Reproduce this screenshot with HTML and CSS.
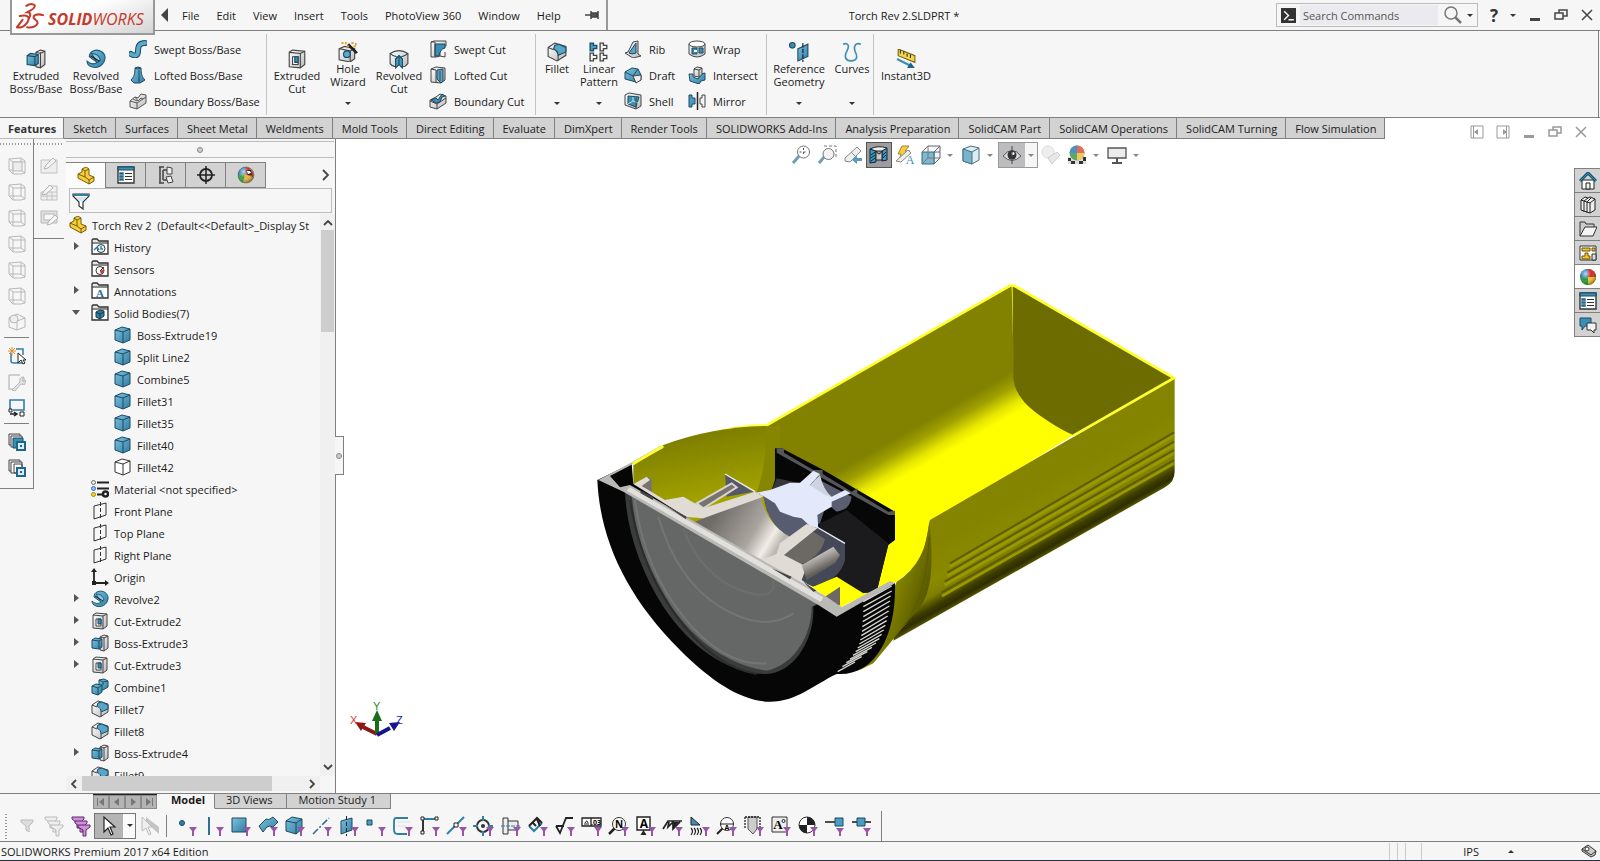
FILE: index.html
```
<!DOCTYPE html>
<html lang="en">
<head>
    <meta charset="utf-8">
    <title>Torch Rev 2.SLDPRT *</title>
    <link rel="stylesheet" href="styles.css">
</head>
<body>
    <!-- icon sprite -->
    <svg class="sprite" aria-hidden="true">
        <defs>
            <linearGradient id="blue" x1="0" y1="0" x2="1" y2="1"><stop offset="0" stop-color="#7fc1de"/><stop offset="1" stop-color="#2f7ea3"/></linearGradient>
            <linearGradient id="grey" x1="0" y1="0" x2="1" y2="1"><stop offset="0" stop-color="#fff"/><stop offset="1" stop-color="#bbb"/></linearGradient>
            <radialGradient id="shine" cx=".35" cy=".3" r=".7"><stop offset="0" stop-color="#fff" stop-opacity=".7"/><stop offset=".5" stop-color="#fff" stop-opacity="0"/><stop offset="1" stop-color="#000" stop-opacity=".35"/></radialGradient>
        </defs>
        <symbol id="extrude" viewBox="0 0 18 18"><path d="M9 3l4-2 4 1v12l-4 3-4-1z" fill="url(#grey)" stroke="#444"/><path d="M13 3v14M9 3l4 1 4-2" fill="none" stroke="#444"/><path d="M1 6l3-2 7 1v8l-3 2-7-1z" fill="url(#blue)" stroke="#1b4b63"/><path d="M1 6l7 1v8M8 7l3-2" fill="none" stroke="#1b4b63"/></symbol>
        <symbol id="revolve" viewBox="0 0 18 18"><path d="M6 2C12-1 18 4 17 9c-1 6-7 9-12 7-3-1-4-3-4-5 3 3 7 3 9 1L3 7c0-3 1-4 3-5z" fill="url(#blue)" stroke="#1b5a78"/><path d="M5 4c4 0 7 2 8 6-1 1-2 2-3 2z" fill="#8ecbe2" stroke="#1b5a78"/><path d="M4 6l8 5" stroke="#222" fill="none"/></symbol>
        <symbol id="sweep" viewBox="0 0 18 18"><path d="M2 14c5 3 7 1 7-3 0-5 1-8 7-8" fill="none" stroke="#1b4b63" stroke-width="6" stroke-linecap="round"/><path d="M2 14c5 3 7 1 7-3 0-5 1-8 7-8" fill="none" stroke="#5ba9cb" stroke-width="4" stroke-linecap="round"/></symbol>
        <symbol id="loft" viewBox="0 0 18 18"><path d="M6 2q3-2 6 0c0 6 1 9 4 12l-5 3H5l-3-3c3-3 4-6 4-12z" fill="url(#blue)" stroke="#1b4b63"/><path d="M6 2q3 2 6 0M10 4v12" fill="none" stroke="#1b4b63"/></symbol>
        <symbol id="boundary" viewBox="0 0 18 18"><path d="M1 9l5-4 3 1 3-4 5 1v8l-9 6-7-2z" fill="url(#grey)" stroke="#555"/><path d="M1 9l7 2 9-6M8 11v6M6 5l3 4 3-3 2 1M4 7l4 2" fill="none" stroke="#555"/></symbol>
        <symbol id="cut" viewBox="0 0 18 18"><path d="M2 3l3-2 11 1v12l-4 3-10-1z" fill="url(#grey)" stroke="#444"/><path d="M2 3l10 1v13M12 4l4-2" fill="none" stroke="#444"/><path d="M5 7h5v7H5z" fill="#fff" stroke="#444"/><path d="M7 7h3v5H7z" fill="#3b8fb5" stroke="#1b4b63"/></symbol>
        <symbol id="hole" viewBox="0 0 18 18"><path d="M1 6l5-2 9 2v9l-4 3-10-2z" fill="url(#grey)" stroke="#444"/><path d="M1 6l10 2v10M11 8l4-2" fill="none" stroke="#444"/><circle cx="8" cy="11" r="3" fill="#5ba9cb" stroke="#1b4b63"/><path d="M9 2l8 8" stroke="#222" stroke-width="2.500"/><path d="M3 1h2M7 0v2M12 1h2M16 1v2M8 4h2M14 4h2" stroke="#e29a1c" stroke-width="1.500"/></symbol>
        <symbol id="revcut" viewBox="0 0 18 18"><path d="M1 4q8-5 16 0v9q-2 3-5 3V9L9 6 6 9v7q-4-1-5-3z" fill="url(#grey)" stroke="#444"/><path d="M9 6l3 3v8l-3-3-3 3V9z" fill="#4a9cc0" stroke="#1b4b63"/><path d="M9 6v8M1 4q3 3 6 3M17 4q-3 3-6 3" fill="none" stroke="#1b4b63"/></symbol>
        <symbol id="sweptcut" viewBox="0 0 18 18"><path d="M2 2l3-1h12v5q-5 0-6 4v6l-4 1H2z" fill="url(#grey)" stroke="#444"/><path d="M6 4h10v4q-5 1-6 8H6z" fill="#3b8fb5" stroke="#1b4b63"/><path d="M2 2h4v15M11 16l5 1V12" fill="none" stroke="#444"/></symbol>
        <symbol id="loftcut" viewBox="0 0 18 18"><path d="M2 3l5-2 9 1v12l-4 3-10-1z" fill="url(#grey)" stroke="#444"/><path d="M8 4l6-1v12l-2 2-4-4z" fill="#58a5c7" stroke="#1b4b63"/><path d="M2 3l5 1v12M11 5v10" fill="none" stroke="#444"/></symbol>
        <symbol id="boundcut" viewBox="0 0 18 18"><path d="M1 8l6-3 4-3 6 2v7l-9 6-7-2z" fill="url(#grey)" stroke="#444"/><path d="M2 8l5-2 2 2 4-6 3 2-3 1-2 5-4 1z" fill="#3b8fb5" stroke="#1b4b63"/><path d="M1 9l7 3 9-6M8 12v5" fill="none" stroke="#444"/></symbol>
        <symbol id="fillet" viewBox="0 0 18 18"><path d="M1 5l6-4 10 3v8l-8 5-8-4z" fill="url(#grey)" stroke="#444"/><path d="M7 3l4-1 6 3v4l-7 3c0-3-1-4-4-6z" fill="#58a5c7" stroke="#1b4b63"/><path d="M1 5l5 2M10 12v5" stroke="#444" fill="none"/></symbol>
        <symbol id="pattern" viewBox="0 0 18 18"><path d="M1 1h3v2h3v3H4v2H1z" fill="#4a9cc0" stroke="#1b4b63" stroke-width="1.200"/><g fill="none" stroke="#444" stroke-width="1.200"><path d="M10 1h3v2h3v3h-3v2h-3zM1 10h3v2h3v3H4v2H1zM10 10h3v2h3v3h-3v2h-3z"/></g></symbol>
        <symbol id="rib" viewBox="0 0 18 18"><path d="M9 2l5-1v13l3 2-8 2-8-5 3-1z" fill="url(#grey)" stroke="#444"/><path d="M12 3v10l-4 1-3-1z" fill="#58a5c7" stroke="#1b4b63"/></symbol>
        <symbol id="draft" viewBox="0 0 18 18"><path d="M1 6l7-4 6 1 3 6v5l-5 2-11-3z" fill="url(#blue)" stroke="#1b4b63"/><path d="M9 10l8-1v5l-5 3z" fill="#eee" stroke="#444"/><path d="M1 6l8 4 5-7" fill="none" stroke="#1b4b63"/></symbol>
        <symbol id="shell" viewBox="0 0 18 18"><path d="M1 3l4-2 12 2v11l-5 3-11-4z" fill="url(#grey)" stroke="#444"/><path d="M4 4l11 1-3 10-8-3z" fill="#3b8fb5" stroke="#1b4b63"/><path d="M4 12l5-3 5 2M9 9V5" fill="none" stroke="#bfe2f0"/><path d="M12 6v11" stroke="#444"/></symbol>
        <symbol id="wrap" viewBox="0 0 18 18"><path d="M1 4v10q8 6 16 0V4" fill="url(#grey)" stroke="#444"/><ellipse cx="9" cy="4" rx="8" ry="3" fill="#fff" stroke="#444"/><path d="M4 8h5v6H4zM11 8h4v5h-4z" fill="#3b8fb5" stroke="#1b4b63"/><path d="M6 10h3v2H6z" fill="#fff"/></symbol>
        <symbol id="intersect" viewBox="0 0 18 18"><path d="M1 8h4v3l5 2 3-5 4-1v7l-4 1-2 3-9-3z" fill="url(#blue)" stroke="#1b4b63"/><path d="M6 3l3-2 5 1v7l-3 2-5-1z" fill="url(#grey)" stroke="#444"/><path d="M6 3l5 1v7M11 4l3-2" fill="none" stroke="#444"/></symbol>
        <symbol id="mirror" viewBox="0 0 18 18"><path d="M1 3h3v3h3v6H4v3H1z" fill="#4a9cc0" stroke="#1b4b63"/><path d="M9.500 0v18" stroke="#222" stroke-width="1.500"/><path d="M17 3h-3v3h-2v6h2v3h3z" fill="none" stroke="#444"/></symbol>
        <symbol id="refgeo" viewBox="0 0 18 18"><circle cx="3" cy="3" r="2.500" fill="#3b8fb5" stroke="#1b4b63"/><path d="M8 6l9-4v11l-9 4z" fill="url(#blue)" stroke="#1b4b63"/><path d="M12.500 1v17" stroke="#113" stroke-dasharray="4 1"/></symbol>
        <symbol id="curves" viewBox="0 0 18 18"><path d="M1 2c5-2 6 2 3 7-2 4-1 8 4 8 6 0 6-4 4-8-2-5 0-9 5-7" fill="none" stroke="#3b8fb5" stroke-width="1.500"/></symbol>
        <symbol id="instant" viewBox="0 0 18 18"><path d="M2 0l15 6v6L2 6z" fill="#f5d84a" stroke="#7a6510"/><path d="M4 1v3M7 2v3M10 4v3M13 5v3" stroke="#333"/><path d="M1 9l12 6" stroke="#3b8fb5" stroke-width="2"/><path d="M17 17l-7 0 3-5z" fill="#1f6688"/></symbol>
        <symbol id="part" viewBox="0 0 18 18"><path d="M1 7l4-2V2l4-2 3 2v6l5 2v4l-5 3L1 11z" fill="#f4cf3a" stroke="#7a5a08"/><path d="M5 2l3 2 4-2M8 4v6l4 3 5-3M12 13v4M1 7l7 3" fill="none" stroke="#7a5a08"/></symbol>
        <symbol id="props" viewBox="0 0 18 18"><path d="M1 1h16v16H1z" fill="#fff" stroke="#333" stroke-width="1.400"/><path d="M1 1h16v3H1z" fill="#3b8fb5" stroke="#1b4b63"/><path d="M3 7h3v1H3zM3 10h3v1H3zM3 13h3v1H3z" fill="#fff" stroke="#1f6688" stroke-width="1.500"/><path d="M8 7.500h7M8 10.500h7M8 13.500h7" stroke="#333"/></symbol>
        <symbol id="config" viewBox="0 0 18 18"><path d="M2 1h5M2 17h5M3 1v16M6 4v10M6 4h4M6 14h4" stroke="#444" stroke-width="1.500" fill="none"/><path d="M10 1l5 1v6h-5zM9 11l5-1 2 6-5 1z" fill="#eee" stroke="#444"/></symbol>
        <symbol id="target" viewBox="0 0 18 18"><circle cx="9" cy="9" r="6" fill="none" stroke="#222" stroke-width="1.800"/><path d="M9 0v18M0 9h18" stroke="#222" stroke-width="1.500"/></symbol>
        <symbol id="ball" viewBox="0 0 18 18"><circle cx="9" cy="9" r="8" fill="#2a9a3c"/><path d="M9 9V1a8 8 0 0 1 8 8z" fill="#d52b26"/><path d="M9 9h8a8 8 0 0 1-8 8z" fill="#f0c42e"/><path d="M9 9H1a8 8 0 0 1 8-8z" fill="#2874c0"/><circle cx="9" cy="9" r="8" fill="url(#shine)"/></symbol>
        <symbol id="display" viewBox="0 0 18 18"><circle cx="9" cy="9" r="8" fill="#e5b545"/><path d="M9 1a8 8 0 0 1 7 10L7 8z" fill="#cc2d24"/><path d="M9 1a8 8 0 0 0-8 8l7-1z" fill="#2874c0"/><path d="M1 9l7-1-2 9Q1 15 1 9z" fill="#3fa24c"/><path d="M8 4l6 0 1 5-4 0z" fill="#222"/><path d="M10 5l3 0 1 2-3 1z" fill="#fff"/><circle cx="9" cy="9" r="8" fill="url(#shine)" stroke="#555" stroke-width=".5"/></symbol>
        <symbol id="funnel" viewBox="0 0 18 18"><path d="M1 2h16v2l-6 6v7l-4-3v-4L1 4z" fill="#fff" stroke="#333" stroke-width="1.200"/><path d="M1 2h16v2H1z" fill="#2f7ea3"/><path d="M3 5h12l-5 5z" fill="#cfe8f2"/></symbol>
        <symbol id="folder" viewBox="0 0 18 18"><path d="M1 16V2l1-1h4l2 2h9v13z" fill="#e6e6e6" stroke="#333" stroke-width="1.300"/><path d="M1 5h16" stroke="#333"/><path d="M2 6h14v9H2z" fill="#fff"/></symbol>
        <symbol id="history" viewBox="0 0 18 18"><use href="#folder"/><circle cx="10" cy="10.500" r="4" fill="#e8f4f9" stroke="#333"/><path d="M10 8v3h2M3 12l3-3 2 3" stroke="#2f7ea3" stroke-width="1.400" fill="none"/></symbol>
        <symbol id="sensors" viewBox="0 0 18 18"><use href="#folder"/><circle cx="9" cy="10.500" r="4" fill="#fff" stroke="#333"/><path d="M9 11l4-4" stroke="#333"/><path d="M9 11l4-2v3l-3 2z" fill="#c8402f"/></symbol>
        <symbol id="bodies" viewBox="0 0 18 18"><use href="#folder"/><path d="M5 8l4-2 4 1v5l-4 3-4-2z" fill="#2f7ea3" stroke="#12384c"/><path d="M5 8l4 2 4-2M9 10v5" fill="none" stroke="#12384c"/></symbol>
        <symbol id="cube" viewBox="0 0 18 18"><path d="M1 4l7-3 8 2v11l-7 3-8-3z" fill="url(#blue)" stroke="#1b4b63"/><path d="M1 4l8 2v11M9 6l7-3" fill="none" stroke="#1b4b63"/></symbol>
        <symbol id="cubewhite" viewBox="0 0 18 18"><path d="M1 4l7-3 8 2v11l-7 3-8-3z" fill="#fff" stroke="#333"/><path d="M1 4l8 2v11M9 6l7-3" fill="none" stroke="#333"/></symbol>
        <symbol id="material" viewBox="0 0 18 18"><path d="M6 2.500h12M6 8.500h12M6 14.500h6" stroke="#222" stroke-width="2"/><circle cx="2.500" cy="2.500" r="2" fill="#eee" stroke="#666"/><circle cx="2.500" cy="8.500" r="2" fill="#8fc4ee" stroke="#36c"/><circle cx="2.500" cy="14.500" r="2" fill="#f0d72e" stroke="#a80"/><circle cx="14.500" cy="14" r="2.500" fill="#fff" stroke="#222" stroke-width="2.500"/></symbol>
        <symbol id="plane" viewBox="0 0 18 18"><path d="M3 4l12-3v12L3 17z" fill="none" stroke="#333"/><path d="M9.500 0v18" stroke="#333" stroke-dasharray="4 2"/></symbol>
        <symbol id="origin" viewBox="0 0 18 18"><path d="M3 3v12h12" fill="none" stroke="#222" stroke-width="1.800"/><path d="M0 4l3-4 3 4zM14 12l4 3-4 3zM1 13h4v4H1z" fill="#222"/></symbol>
        <symbol id="combine" viewBox="0 0 18 18"><path d="M8 2l5-1 4 2v6l-5 3-4-2z" fill="url(#blue)" stroke="#1b4b63"/><path d="M1 8l4-2 6 1v7l-4 3-6-2z" fill="url(#blue)" stroke="#1b4b63"/><path d="M1 8l6 2v7M7 10l4-3M8 2l4 2v3M12 4l5-1" fill="none" stroke="#1b4b63"/></symbol>
        <symbol id="wire" viewBox="0 0 18 18"><path d="M1 2l12-1 4 3v12l-4 1H5l-4-4zM1 2l4 3v12M5 5h12M13 1v12H1M13 13l4 3" fill="none" stroke="#b8b8b8"/></symbol>
        <symbol id="wiresel" viewBox="0 0 18 18"><use href="#wire"/><path d="M5 5h9v9H5z" fill="#ececec" stroke="#b8b8b8"/></symbol>
        <symbol id="wireiso" viewBox="0 0 18 18"><path d="M1 5l8-4 8 4v9l-8 3-8-3zM1 5l8 3 8-3M9 8v9" fill="none" stroke="#b8b8b8"/><circle cx="6" cy="6" r="4" fill="#eee" stroke="#b8b8b8"/></symbol>
        <symbol id="sketch1" viewBox="0 0 18 18"><path d="M1 3h16v13H1z" fill="#eee" stroke="#c2c2c2"/><path d="M4 12l2-4 7-7 3 3-8 7z" fill="#f5f5f5" stroke="#b4b4b4"/></symbol>
        <symbol id="sketch2" viewBox="0 0 18 18"><path d="M1 9h16v8H1zM1 13h16M7 9v8M12 9v8M8 3h9v6" fill="#eee" stroke="#c2c2c2"/><path d="M2 12l2-4 6-6 3 3-7 6z" fill="#f5f5f5" stroke="#b4b4b4"/></symbol>
        <symbol id="sketch3" viewBox="0 0 18 18"><path d="M1 2h16v12H1z" fill="#e0e0e0" stroke="#b8b8b8"/><path d="M4 5h10v6H4z" fill="#f7f7f7" stroke="#b8b8b8"/><path d="M7 16l2-4 6-6 3 3-7 6z" fill="#f5f5f5" stroke="#b4b4b4"/></symbol>
        <symbol id="newsketch" viewBox="0 0 18 18"><path d="M3 6v8q0 2 3 2h11M8 2h7v6" fill="none" stroke="#2f7ea3" stroke-width="1.500"/><path d="M4 0v8M0 4h8M1 1l6 6M7 1L1 7" stroke="#e0932a"/><path d="M10 6v10l3-3 2 4 2-1-2-3h3z" fill="#fff" stroke="#222"/></symbol>
        <symbol id="tool" viewBox="0 0 18 18"><path d="M1 2h11M1 2v14h8M16 5v7" fill="none" stroke="#c2c2c2" stroke-width="1.500"/><path d="M4 17l8-8c-1-4 1-5 4-5l-2 3 2 2 2-2c0 4-2 5-5 4l-6 7z" fill="#e2e2e2" stroke="#b8b8b8"/></symbol>
        <symbol id="route" viewBox="0 0 18 18"><path d="M2 10V1h14v10H5" fill="none" stroke="#2f7ea3" stroke-width="1.600"/><path d="M1 10h3v3H1zM12 13h4v4h-4z" fill="#fff" stroke="#222"/><path d="M2 15h6M6 13l3 2-3 2" stroke="#222" stroke-width="1.500" fill="none"/></symbol>
        <symbol id="stack1" viewBox="0 0 18 18"><path d="M1 1h11v11H1z" fill="#eee" stroke="#444"/><path d="M3 3h11v11H3z" fill="#fff" stroke="#444"/><path d="M5 5h10v10H5z" fill="#3b8fb5" stroke="#1b4b63"/><path d="M9 9h8v8H9z" fill="#d8eef6" stroke="#1f6688" stroke-width="2"/><path d="M12 12h2v2h-2z" fill="#1f6688"/></symbol>
        <symbol id="stack2" viewBox="0 0 18 18"><path d="M1 1h11v11H1z" fill="#eee" stroke="#444"/><path d="M3 3h11v11H3zM6 5h8v9H6z" fill="#fff" stroke="#444"/><path d="M9 9h8v8H9z" fill="#d8eef6" stroke="#1f6688" stroke-width="2"/><path d="M12 12h2v2h-2z" fill="#1f6688"/></symbol>
        <!-- view toolbar -->
        <symbol id="zoomfit" viewBox="0 0 20 20"><path d="M2 18l7-8" stroke="#6e9fb5" stroke-width="3"/><circle cx="12.500" cy="7" r="6" fill="#fff" stroke="#777"/><path d="M12.500 3v8M8.500 7h8" stroke="#555" stroke-dasharray="2 2"/></symbol>
        <symbol id="zoomarea" viewBox="0 0 20 20"><path d="M7 1h12v12" fill="none" stroke="#777" stroke-dasharray="3 2"/><path d="M2 18l6-7" stroke="#6e9fb5" stroke-width="3"/><circle cx="11.500" cy="9" r="5.500" fill="#f3f3f3" stroke="#777"/></symbol>
        <symbol id="prevview" viewBox="0 0 20 20"><path d="M2 13L14 2l4 4L7 17l-5-1z" fill="#eee" stroke="#888"/><path d="M8 7l4 4" stroke="#888"/><path d="M19 13h-5v-3l-5 5 5 4v-3h5z" fill="#5c9cba"/></symbol>
        <symbol id="section" viewBox="0 0 20 20"><path d="M1 4l6 2v11l-6 1zM13 6l5-3v12l-5 1z" fill="#3b9cc6" stroke="#10222c"/><path d="M1 4q8-4 17-1l-5 3H7z" fill="#eee" stroke="#222"/><path d="M7 6q3 6 6 0v9H7z" fill="#c9c9c9" stroke="#222"/><path d="M2 10l4-3M2 13l4-3M2 16l4-3M14 10l3-3M14 13l3-3" stroke="#10222c"/></symbol>
        <symbol id="viewann" viewBox="0 0 20 20"><path d="M7 1h7l-4 5h5L4 16l2-7H3z" fill="#f3cd45" stroke="#a88420"/><path d="M1 16L13 5l3 3-10 9z" fill="#eee" stroke="#888"/></symbol>
        <symbol id="orient" viewBox="0 0 20 20"><path d="M7 1h12v12l-6 6V7h6M7 1L1 7M19 1l-6 6" fill="#eef6f9" stroke="#666"/><path d="M1 7h12v12H1z" fill="#7fb9d0" stroke="#336680"/><path d="M7 13V1M19 13H7l-6 6" fill="none" stroke="#777"/></symbol>
        <symbol id="dispcube" viewBox="0 0 20 20"><path d="M2 4l8-3 8 2v12l-7 4-9-3z" fill="#dcecf2" stroke="#446f82"/><path d="M2 4l9 3v12l-9-3z" fill="#78b4cc" stroke="#446f82"/><path d="M11 7l7-4" stroke="#446f82"/></symbol>
        <symbol id="eye" viewBox="0 0 20 20"><path d="M1 11q9-11 18 0-9 9-18 0z" fill="#ddd" stroke="#555"/><circle cx="10" cy="10" r="4.500" fill="#333"/><circle cx="11" cy="8.500" r="1.500" fill="#fff"/><path d="M10 1v18" stroke="#444"/></symbol>
        <symbol id="scene" viewBox="0 0 20 20"><circle cx="7" cy="7" r="6" fill="#eee" stroke="#ddd"/><path d="M7 13l9-6 3 3-8 9z" fill="#e8e8e8" stroke="#ccc"/></symbol>
        <symbol id="appear" viewBox="0 0 20 20"><path d="M1 12h18v7H1z" fill="#ddd"/><path d="M1 13h3v3H1zM4 16h4v3H4zM12 16h4v3h-4zM16 12h3v4h-3z" fill="#333"/><circle cx="10" cy="8" r="7.500" fill="#5ca867"/><path d="M10 8V.5a7.500 7.500 0 0 1 7.500 7.500z" fill="#e46a58"/><path d="M10 8h7.500a7.500 7.500 0 0 1-7.500 7.500z" fill="#edc95d"/><path d="M10 8H2.500A7.500 7.500 0 0 1 10 .5z" fill="#4d90c8"/></symbol>
        <symbol id="monitor" viewBox="0 0 20 20"><path d="M1 3h18v10H1z" fill="#ececec" stroke="#555" stroke-width="1.300"/><path d="M10 13v4M5 18h10" stroke="#555" stroke-width="2"/></symbol>
        <!-- task pane -->
        <symbol id="home" viewBox="0 0 18 18"><path d="M3 8h12v9H3z" fill="#fff" stroke="#222"/><path d="M7 11h4v6H7z" fill="#eee" stroke="#222"/><path d="M1 9l8-8 8 8" fill="none" stroke="#17516d" stroke-width="3"/><path d="M1 9l8-8 8 8" fill="none" stroke="#3b8fb5"/></symbol>
        <symbol id="library" viewBox="0 0 18 18"><path d="M2 4l4-3 3 1 2-1 5 2v11l-5 3-9-3z" fill="#eee" stroke="#222"/><path d="M2 4l3 1v11M5 5l4-3M5 5l3 1v11M8 6l4-4M8 6l3 1v10M11 7l5-4" fill="none" stroke="#222"/></symbol>
        <symbol id="open" viewBox="0 0 18 18"><path d="M1 16V2h5l1 2h8v3" fill="#ccc" stroke="#333"/><path d="M1 16L6 7h12l-4 9z" fill="#f5f5f5" stroke="#333"/></symbol>
        <symbol id="palette" viewBox="0 0 18 18"><path d="M1 2h16v14H1z" fill="#fff" stroke="#333"/><path d="M3 4h8v3H3zM13 4h3v3h-3zM6 9h3v3h2v3H3v-3h3z" fill="#f0c42e" stroke="#6a5508"/><path d="M13 10h4v6h-4z" fill="#ddd" stroke="#333"/></symbol>
        <symbol id="forum" viewBox="0 0 18 18"><path d="M1 2h11v8H6l-3 4v-4H1z" fill="#3b8fb5" stroke="#1b4b63"/><path d="M8 7h9v7h-2v3l-3-3H8z" fill="#f2f2f2" stroke="#333"/></symbol>
        <!-- selection filters -->
        <symbol id="pf" viewBox="0 0 24 24"><path d="M14 13h8l-3 4v5h-2v-5z" fill="#9a55a8"/></symbol>
        <symbol id="f-off" viewBox="0 0 24 24"><path d="M6 6h12v2l-4 4v6l-3-2v-4L6 8z" fill="#ddd" stroke="#bbb"/></symbol>
        <symbol id="f-offs" viewBox="0 0 24 24"><g fill="#eee" stroke="#bbb"><path d="M3 3h12v2l-4 4v5H8V9L3 5z"/><path d="M6 7h12v2l-4 4v5h-3v-5L6 9z"/><path d="M9 11h12v2l-4 3v6h-3v-6l-5-3z"/></g></symbol>
        <symbol id="f-all" viewBox="0 0 24 24"><g fill="#cf8fdc" stroke="#5c2a69"><path d="M3 3h12v2l-4 4v5H8V9L3 5z"/><path d="M6 7h12v2l-4 4v5h-3v-5L6 9z"/><path d="M9 11h12v2l-4 3v6h-3v-6l-5-3z"/></g></symbol>
        <symbol id="arrow" viewBox="0 0 24 24"><path d="M8 3v15l4-4 3 7 2-1-3-7h5z" fill="#fff" stroke="#222" stroke-width="1.200"/></symbol>
        <symbol id="arrowoff" viewBox="0 0 24 24"><path d="M8 3l13 10v7L8 8z" fill="#c4c4c4"/><path d="M4 3v14l4-3 3 7 2-1-3-7h4z" fill="#eee" stroke="#bbb"/></symbol>
        <symbol id="f-pt" viewBox="0 0 24 24"><circle cx="7" cy="9" r="2.500" fill="#2f7ea3" stroke="#1b4b63"/><use href="#pf"/></symbol>
        <symbol id="f-edge" viewBox="0 0 24 24"><path d="M7 3v18" stroke="#2f6f8f" stroke-width="2"/><use href="#pf"/></symbol>
        <symbol id="f-face" viewBox="0 0 24 24"><path d="M3 4h14v14H3z" fill="url(#blue)" stroke="#1b4b63"/><use href="#pf"/></symbol>
        <symbol id="f-surf" viewBox="0 0 24 24"><path d="M3 12l7-7q3 1 4 0l3-2 5 5-5 5q-3-2-6 0l-4 5z" fill="url(#blue)" stroke="#1b4b63"/><use href="#pf"/></symbol>
        <symbol id="f-solid" viewBox="0 0 24 24"><path d="M3 7l6-4 10 2v10l-6 5-10-3z" fill="url(#blue)" stroke="#1b4b63"/><path d="M3 7l10 2v11M13 9l6-4" fill="none" stroke="#1b4b63"/><use href="#pf"/></symbol>
        <symbol id="f-axis" viewBox="0 0 24 24"><path d="M3 20L19 4" stroke="#2f6f8f" stroke-width="1.600" stroke-dasharray="7 2 2 2"/><use href="#pf"/></symbol>
        <symbol id="f-plane" viewBox="0 0 24 24"><path d="M4 7l11-3v12L4 20z" fill="url(#blue)" stroke="#1b4b63"/><path d="M9.500 2v20" stroke="#222" stroke-dasharray="4 2"/><use href="#pf"/></symbol>
        <symbol id="f-skpt" viewBox="0 0 24 24"><path d="M3 6h5v5H3z" fill="#4a9cc0" stroke="#1b4b63"/><use href="#pf"/></symbol>
        <symbol id="f-sk" viewBox="0 0 24 24"><path d="M17 4H5q-2 0-2 3v9q0 4 4 4h9" fill="none" stroke="#2f7ea3" stroke-width="1.800"/><path d="M7 8h12M7 12h8" stroke="#ddd"/><use href="#pf"/></symbol>
        <symbol id="f-skseg" viewBox="0 0 24 24"><path d="M5 5h13" stroke="#2f7ea3" stroke-width="2"/><path d="M5 5v14" stroke="#333" stroke-width="2"/><path d="M3 3h3v3H3zM17 3h3v3h-3zM3 17h3v3H3z" fill="#fff" stroke="#222"/><use href="#pf"/></symbol>
        <symbol id="f-mid" viewBox="0 0 24 24"><path d="M2 20L19 3" stroke="#2f7ea3" stroke-width="2"/><path d="M9 9h4v4H9z" fill="#fff" stroke="#222"/><use href="#pf"/></symbol>
        <symbol id="f-center" viewBox="0 0 24 24"><circle cx="11" cy="12" r="6" fill="none" stroke="#333" stroke-width="2"/><circle cx="11" cy="12" r="2" fill="#333"/><path d="M11 2v5M11 17v5M1 12h5M16 12h5" stroke="#2f7ea3" stroke-width="2"/><use href="#pf"/></symbol>
        <symbol id="f-cline" viewBox="0 0 24 24"><path d="M4 4h5v16H4zM9 7h10v9H9" fill="#eee" stroke="#333"/><path d="M2 12h20" stroke="#2f7ea3" stroke-dasharray="4 1"/><use href="#pf"/></symbol>
        <symbol id="f-dim" viewBox="0 0 24 24"><path d="M3 12l5 5 8-8" fill="none" stroke="#2f7ea3" stroke-width="2"/><path d="M3 12l8-8 5 5M6 8l4 4M11 5l3 7" fill="none" stroke="#222" stroke-width="2"/><use href="#pf"/></symbol>
        <symbol id="f-surffin" viewBox="0 0 24 24"><path d="M3 12h8M3 12l4 7L13 4h7" fill="none" stroke="#222" stroke-width="1.800"/><use href="#pf"/></symbol>
        <symbol id="f-gtol" viewBox="0 0 24 24"><path d="M2 4h19v8H2zM11 4v8" fill="#fff" stroke="#222" stroke-width="1.300"/><path d="M4 10h5M5 9q2-4 3 0" fill="none" stroke="#222"/><use href="#pf"/></symbol>
        <symbol id="f-note" viewBox="0 0 24 24"><path d="M2 20l6-6" stroke="#222" stroke-width="2.500"/><circle cx="12" cy="10" r="6.500" fill="#fff" stroke="#333"/><use href="#pf"/></symbol>
        <symbol id="f-datum" viewBox="0 0 24 24"><path d="M3 3h13v13H3z" fill="#fff" stroke="#222" stroke-width="1.400"/><path d="M9.500 16l3 5h-6z" fill="#222"/><use href="#pf"/></symbol>
        <symbol id="f-weld" viewBox="0 0 24 24"><path d="M2 15l5-8h14M8 8l-1 5 5-5v7l7-7" fill="none" stroke="#222" stroke-width="1.700"/><path d="M12 8h6l-6 7z" fill="#222"/><use href="#pf"/></symbol>
        <symbol id="f-weldb" viewBox="0 0 24 24"><path d="M3 3v8h9z" fill="#3b8fb5" stroke="#222"/><path d="M3 14q3 3 0 7M6 14q3 3 0 7M9 14q3 3 0 7M12 14q3 3 0 7" fill="none" stroke="#222" stroke-width="1.200"/><use href="#pf"/></symbol>
        <symbol id="f-datumt" viewBox="0 0 24 24"><path d="M2 20l6-6" stroke="#222" stroke-width="2"/><circle cx="12" cy="10" r="6.500" fill="#fff" stroke="#333"/><path d="M5 10h14" stroke="#222"/><use href="#pf"/></symbol>
        <symbol id="f-cosm" viewBox="0 0 24 24"><path d="M6 3h9v12l-4 5-5-5z" fill="#ccc" stroke="#555"/><path d="M3 3v12M18 3v10M3 3h15" fill="none" stroke="#222" stroke-dasharray="2 1" stroke-width="1.300"/><use href="#pf"/></symbol>
        <symbol id="f-block" viewBox="0 0 24 24"><path d="M3 3h15v15H3z" fill="#eee" stroke="#333"/><circle cx="14.500" cy="7" r="1.500" fill="none" stroke="#222"/><use href="#pf"/></symbol>
        <symbol id="f-dowel" viewBox="0 0 24 24"><circle cx="11" cy="11" r="8" fill="#fff" stroke="#333"/><path d="M11 11V3a8 8 0 0 1 8 8zM11 11v8a8 8 0 0 1-8-8z" fill="#222"/><use href="#pf"/></symbol>
        <symbol id="f-conn" viewBox="0 0 24 24"><path d="M2 8h12" stroke="#222" stroke-width="1.600"/><path d="M12 4h8v8h-8z" fill="#4a9cc0" stroke="#1b4b63"/><path d="M13 14h8l-3 4v4h-2v-4z" fill="#9a55a8"/></symbol>
        <symbol id="f-route" viewBox="0 0 24 24"><path d="M2 8h19" stroke="#222" stroke-width="1.600"/><path d="M7 4h8v8H7z" fill="#4a9cc0" stroke="#1b4b63"/><path d="M13 14h8l-3 4v4h-2v-4z" fill="#9a55a8"/></symbol>
        <!-- window controls -->
        <symbol id="restore" viewBox="0 0 14 14"><path d="M5 5V2h8v6H9M1 5h8v6H1z" fill="none" stroke="currentColor" stroke-width="1.500"/></symbol>
        <symbol id="close" viewBox="0 0 14 14"><path d="M2 2l10 10M12 2L2 12" stroke="currentColor" stroke-width="1.500"/></symbol>
        <symbol id="minimize" viewBox="0 0 14 14"><path d="M2 10h10v3H2z" fill="currentColor"/></symbol>
        <symbol id="dockleft" viewBox="0 0 14 14"><path d="M1 1h12v12H1zM3.500 1v12" fill="none" stroke="currentColor"/><path d="M8 4v6L4 7z" fill="currentColor"/></symbol>
        <symbol id="dockright" viewBox="0 0 14 14"><path d="M1 1h12v12H1zM10.500 1v12" fill="none" stroke="currentColor"/><path d="M7 4v6l4-3z" fill="currentColor"/></symbol>
    </svg>

    <div class="app">
        <header class="titlebar">
            <div class="menubar">
                <div class="logo">
                    <svg class="logo-mark" viewBox="0 0 30 32" aria-hidden="true"><g fill="none" stroke="#c43a2c" stroke-width="2.200" stroke-linecap="round"><path d="M11 4c5-3 10-2 9 1-1 3-5 4-8 6 4 0 4 3 2 6"/><path d="M4 15c10-2 11 2 8 7-3 4-7 6-11 5l6-8"/><path d="M29 14c-6-2-11 0-10 3 1 2 5 3 4 6s-6 5-11 4"/></g></svg>
                    <span class="logo-text"><b>SOLID</b>WORKS</span>
                </div>
                <button class="menu-toggle" aria-label="Collapse menu"></button>
                <nav class="menu">
                    <button>File</button>
                    <button>Edit</button>
                    <button>View</button>
                    <button>Insert</button>
                    <button>Tools</button>
                    <button>PhotoView 360</button>
                    <button>Window</button>
                    <button>Help</button>
                </nav>
                <button class="pin" aria-label="Pin menu"><svg viewBox="0 0 14 10"><path d="M0 5h6M6 1v8M6 3h6v4H6M13 1v8" fill="#555" stroke="#444" stroke-width="1.500"/></svg></button>
            </div>
            <div class="doc-title">Torch Rev 2.SLDPRT *</div>
            <div class="title-tools">
                <div class="search">
                    <svg class="prompt" viewBox="0 0 14 14" aria-hidden="true"><path d="M0 0h14v14H0z" fill="#333"/><path d="M3 3l4 4-4 4M7 11h5" fill="none" stroke="#fff" stroke-width="1.300"/></svg>
                    <input type="text" placeholder="Search Commands" aria-label="Search Commands">
                    <button class="go" aria-label="Search"><svg viewBox="0 0 18 18"><circle cx="7" cy="7" r="6" fill="none" stroke="#777" stroke-width="1.500"/><path d="M11 11l6 6" stroke="#777" stroke-width="2.500"/></svg><span class="caret"></span></button>
                </div>
                <button class="help">?</button>
                <button class="help-more" aria-label="Help menu"><span class="caret"></span></button>
                <div class="window-buttons">
                    <button aria-label="Minimize"><svg><use href="#minimize"/></svg></button>
                    <button aria-label="Restore"><svg><use href="#restore"/></svg></button>
                    <button aria-label="Close"><svg><use href="#close"/></svg></button>
                </div>
            </div>
        </header>

        <div class="ribbon">
            <div class="ribbon-group">
                <button class="big mid"><svg><use href="#extrude"/></svg><span>Extruded<br>Boss/Base</span></button>
                <button class="big mid"><svg><use href="#revolve"/></svg><span>Revolved<br>Boss/Base</span></button>
                <div class="stack wide">
                    <button><svg><use href="#sweep"/></svg>Swept Boss/Base</button>
                    <button><svg><use href="#loft"/></svg>Lofted Boss/Base</button>
                    <button><svg><use href="#boundary"/></svg>Boundary Boss/Base</button>
                </div>
            </div>
            <div class="ribbon-group">
                <button class="big mid"><svg><use href="#cut"/></svg><span>Extruded<br>Cut</span></button>
                <button class="big slim"><svg><use href="#hole"/></svg><span>Hole<br>Wizard</span><span class="caret"></span></button>
                <button class="big mid"><svg><use href="#revcut"/></svg><span>Revolved<br>Cut</span></button>
                <div class="stack cuts">
                    <button><svg><use href="#sweptcut"/></svg>Swept Cut</button>
                    <button><svg><use href="#loftcut"/></svg>Lofted Cut</button>
                    <button><svg><use href="#boundcut"/></svg>Boundary Cut</button>
                </div>
            </div>
            <div class="ribbon-group">
                <button class="big slim"><svg><use href="#fillet"/></svg><span>Fillet</span><span class="caret"></span></button>
                <button class="big slim"><svg><use href="#pattern"/></svg><span>Linear<br>Pattern</span><span class="caret"></span></button>
                <div class="stack small">
                    <button><svg><use href="#rib"/></svg>Rib</button>
                    <button><svg><use href="#draft"/></svg>Draft</button>
                    <button><svg><use href="#shell"/></svg>Shell</button>
                </div>
                <div class="stack wraps">
                    <button><svg><use href="#wrap"/></svg>Wrap</button>
                    <button><svg><use href="#intersect"/></svg>Intersect</button>
                    <button><svg><use href="#mirror"/></svg>Mirror</button>
                </div>
            </div>
            <div class="ribbon-group">
                <button class="big roomy"><svg><use href="#refgeo"/></svg><span>Reference<br>Geometry</span><span class="caret"></span></button>
                <button class="big slim"><svg><use href="#curves"/></svg><span>Curves</span><span class="caret"></span></button>
            </div>
            <div class="ribbon-group last">
                <button class="big roomy mid"><svg><use href="#instant"/></svg><span>Instant3D</span></button>
            </div>
        </div>

        <div class="tabrow">
            <div class="tabs">
                <button class="active">Features</button>
                <button>Sketch</button>
                <button>Surfaces</button>
                <button>Sheet Metal</button>
                <button>Weldments</button>
                <button>Mold Tools</button>
                <button>Direct Editing</button>
                <button>Evaluate</button>
                <button>DimXpert</button>
                <button>Render Tools</button>
                <button>SOLIDWORKS Add-Ins</button>
                <button>Analysis Preparation</button>
                <button>SolidCAM Part</button>
                <button>SolidCAM Operations</button>
                <button>SolidCAM Turning</button>
                <button>Flow Simulation</button>
            </div>
            <div class="doc-buttons">
                <button aria-label="Dock left"><svg><use href="#dockleft"/></svg></button>
                <button aria-label="Dock right"><svg><use href="#dockright"/></svg></button>
                <button aria-label="Minimize document"><svg><use href="#minimize"/></svg></button>
                <button aria-label="Restore document"><svg><use href="#restore"/></svg></button>
                <button aria-label="Close document"><svg><use href="#close"/></svg></button>
            </div>
        </div>

        <main class="main">
            <div class="sidebar views">
                <button aria-label="Front"><svg><use href="#wiresel"/></svg></button>
                <button aria-label="Back"><svg><use href="#wire"/></svg></button>
                <button aria-label="Left"><svg><use href="#wire"/></svg></button>
                <button aria-label="Right"><svg><use href="#wire"/></svg></button>
                <button aria-label="Top"><svg><use href="#wire"/></svg></button>
                <button aria-label="Bottom"><svg><use href="#wire"/></svg></button>
                <button aria-label="Isometric"><svg><use href="#wireiso"/></svg></button>
                <hr>
                <button aria-label="New sketch"><svg><use href="#newsketch"/></svg></button>
                <button aria-label="Repair"><svg><use href="#tool"/></svg></button>
                <button aria-label="Route"><svg><use href="#route"/></svg></button>
                <hr>
                <button aria-label="Stack"><svg><use href="#stack1"/></svg></button>
                <button aria-label="Stack outline"><svg><use href="#stack2"/></svg></button>
            </div>
            <div class="sidebar sketches">
                <button aria-label="Sketch"><svg><use href="#sketch1"/></svg></button>
                <button aria-label="Sketch grid"><svg><use href="#sketch2"/></svg></button>
                <button aria-label="Edit sketch"><svg><use href="#sketch3"/></svg></button>
            </div>
            <section class="panel">
                <div class="grip"><span class="dot"></span></div>
                <div class="panel-tabs">
                    <button class="active" aria-label="Feature tree"><svg><use href="#part"/></svg></button>
                    <button aria-label="Properties"><svg><use href="#props"/></svg></button>
                    <button aria-label="Configurations"><svg><use href="#config"/></svg></button>
                    <button aria-label="DimXpert manager"><svg><use href="#target"/></svg></button>
                    <button aria-label="Display manager"><svg><use href="#display"/></svg></button>
                    <button class="more" aria-label="More"><svg viewBox="0 0 8 12"><path d="M1 1l5 5-5 5" fill="none" stroke="#444" stroke-width="1.800"/></svg></button>
                </div>
                <div class="filter">
                    <svg><use href="#funnel"/></svg>
                    <input type="text" aria-label="Filter tree">
                </div>
                <div class="tree-wrap">
                    <ul class="tree">
                        <li class="root"><svg><use href="#part"/></svg>Torch Rev 2&nbsp; (Default&lt;&lt;Default&gt;_Display St</li>
                        <li class="closed"><svg><use href="#history"/></svg>History</li>
                        <li><svg><use href="#sensors"/></svg>Sensors</li>
                        <li class="closed"><svg viewBox="0 0 18 18"><use href="#folder"/><text class="serif" x="9" y="15" font-size="11" fill="#2a6f96">A</text></svg>Annotations</li>
                        <li class="opened"><svg><use href="#bodies"/></svg>Solid Bodies(7)</li>
                        <li class="sub"><svg><use href="#cube"/></svg>Boss-Extrude19</li>
                        <li class="sub"><svg><use href="#cube"/></svg>Split Line2</li>
                        <li class="sub"><svg><use href="#cube"/></svg>Combine5</li>
                        <li class="sub"><svg><use href="#cube"/></svg>Fillet31</li>
                        <li class="sub"><svg><use href="#cube"/></svg>Fillet35</li>
                        <li class="sub"><svg><use href="#cube"/></svg>Fillet40</li>
                        <li class="sub"><svg><use href="#cubewhite"/></svg>Fillet42</li>
                        <li><svg><use href="#material"/></svg>Material &lt;not specified&gt;</li>
                        <li><svg><use href="#plane"/></svg>Front Plane</li>
                        <li><svg><use href="#plane"/></svg>Top Plane</li>
                        <li><svg><use href="#plane"/></svg>Right Plane</li>
                        <li><svg><use href="#origin"/></svg>Origin</li>
                        <li class="closed"><svg><use href="#revolve"/></svg>Revolve2</li>
                        <li class="closed"><svg><use href="#cut"/></svg>Cut-Extrude2</li>
                        <li class="closed"><svg><use href="#extrude"/></svg>Boss-Extrude3</li>
                        <li class="closed"><svg><use href="#cut"/></svg>Cut-Extrude3</li>
                        <li><svg><use href="#combine"/></svg>Combine1</li>
                        <li><svg><use href="#fillet"/></svg>Fillet7</li>
                        <li><svg><use href="#fillet"/></svg>Fillet8</li>
                        <li class="closed"><svg><use href="#extrude"/></svg>Boss-Extrude4</li>
                        <li><svg><use href="#fillet"/></svg>Fillet9</li>
                    </ul>
                    <div class="vscroll">
                        <svg viewBox="0 0 10 6"><path d="M1 5l4-4 4 4" fill="none" stroke="#444" stroke-width="1.800"/></svg>
                        <span class="thumb"></span>
                        <svg viewBox="0 0 10 6"><path d="M1 1l4 4 4-4" fill="none" stroke="#444" stroke-width="1.800"/></svg>
                    </div>
                </div>
                <div class="hscroll">
                    <svg viewBox="0 0 6 10"><path d="M5 1L1 5l4 4" fill="none" stroke="#444" stroke-width="1.800"/></svg>
                    <span class="thumb"></span>
                    <svg viewBox="0 0 6 10"><path d="M1 1l4 4-4 4" fill="none" stroke="#444" stroke-width="1.800"/></svg>
                </div>
            </section>

            <section class="viewport">
                <svg class="model" viewBox="336 139 1264 654" role="img" aria-label="Section view of torch">
                    <defs>
                        <linearGradient id="wall" gradientUnits="userSpaceOnUse" x1="796" y1="317" x2="852" y2="415"><stop offset="0" stop-color="#828200"/><stop offset=".35" stop-color="#a0a000"/><stop offset=".75" stop-color="#e6e600"/><stop offset="1" stop-color="#ffff00"/></linearGradient>
                        <linearGradient id="side" gradientUnits="userSpaceOnUse" x1="1182" y1="487" x2="1275" y2="652"><stop offset="0" stop-color="#848400"/><stop offset=".5" stop-color="#8a8a00"/><stop offset=".68" stop-color="#808000"/><stop offset=".85" stop-color="#3c3c00"/><stop offset=".93" stop-color="#2e2e00"/><stop offset="1" stop-color="#555500"/></linearGradient>
                        <linearGradient id="cone" gradientUnits="userSpaceOnUse" x1="440" y1="960" x2="560" y2="1000"><stop offset="0" stop-color="#8e8e00"/><stop offset="1" stop-color="#555500"/></linearGradient>
                        <linearGradient id="bowl" gradientUnits="userSpaceOnUse" x1="300" y1="100" x2="340" y2="320"><stop offset="0" stop-color="#7c7c00"/><stop offset="1" stop-color="#a4a400"/></linearGradient>
                        <linearGradient id="reflector" gradientUnits="userSpaceOnUse" x1="420" y1="320" x2="600" y2="430"><stop offset="0" stop-color="#6e6a66"/><stop offset=".6" stop-color="#aaa59f"/><stop offset=".85" stop-color="#f2ede8"/><stop offset="1" stop-color="#bdb8b2"/></linearGradient>
                        <linearGradient id="tube" gradientUnits="userSpaceOnUse" x1="700" y1="460" x2="725" y2="510"><stop offset="0" stop-color="#d8d3cd"/><stop offset="1" stop-color="#615e5a"/></linearGradient>
                    </defs>
                    <!-- body -->
                    <g transform="translate(740 270) scale(.33333)">
                        <path d="M-150 700L78 465 812 45 1300 322 1000 495 575 745 570 800 540 880 470 935 300 1010 0 800z" fill="#ff0"/>
                        <path d="M0 690L78 465 815 48 822 320Q830 380 890 430L1000 495 560 770 350 900z" fill="url(#wall)"/>
                        <path d="M818 48L1300 325 1000 495Q960 480 890 430 822 380 820 320z" fill="#6c6c00"/>
                        <path d="M570 750L1304 325V605Q1304 635 1275 652L460 1112 480 1010 540 900z" fill="url(#side)"/>
                        <path d="M470 935Q560 880 568 750 590 950 540 1010T400 1180L360 1200z" fill="url(#cone)"/>
                        <path d="M568 800Q560 980 490 1070" fill="none" stroke="#5d5d00" stroke-width="4"/>
                        <g fill="none">
                            <path d="M630 890L1302 497M622 918L1302 525M614 945L1302 550M606 978L1302 580" stroke="#9a9a00" stroke-width="8"/>
                            <path d="M630 880L1302 487M622 908L1302 515M614 935L1302 540M604 968L1302 570" stroke="#5e5e00" stroke-width="6"/>
                            <path d="M-230 560Q-80 465 78 467L805 50Q815 42 828 50L1302 324 1000 497" stroke="#ffff30" stroke-width="8"/>
                        </g>
                    </g>
                    <!-- head, reflector and lens -->
                    <g transform="translate(580 400) scale(.33333)">
                        <path d="M160 195L250 135Q400 80 558 78L600 200V400H330L160 260z" fill="url(#bowl)"/>
                        <path d="M558 78Q562 200 525 290L600 300V78z" fill="#868600"/>
                        <path d="M585 145L605 145 730 210 945 335V420L925 435 890 575 848 578 700 520 560 330 575 270 585 240z" fill="#070707"/>
                        <path d="M720 370L800 330 925 430 890 575 845 580 700 520z" fill="#1b1b1d"/>
                        <path d="M575 270L590 235 660 250 600 280z" fill="#35363c"/>
                        <path d="M590 145L612 145 612 158 700 210 728 210 728 222 815 275 832 265 832 280 925 335 945 332V345L925 345 590 158z" fill="#55565a"/>
                        <path d="M680 365L795 430V480Q780 540 700 560L560 500z" fill="#454856"/>
                        <path d="M795 430L700 375" stroke="#eef" stroke-width="4"/>
                        <path d="M690 225L815 290Q810 330 770 335L740 310z" fill="#5a5e70"/>
                        <path d="M690 255L720 225Q730 270 755 290L720 290z" fill="#cfd2e0"/>
                        <path d="M550 285Q560 370 625 410L720 370 740 310 640 280z" fill="#585c70"/>
                        <path d="M520 280L570 270 630 248 660 248 700 212 720 222 690 255 735 285 755 290 795 270 812 280 755 305 755 320 712 345 715 385 690 378 665 355 640 350 600 335 585 310 550 288z" fill="#e3e9fb"/>
                        <path d="M435 222L520 275 440 290z" fill="#55586a"/>
                        <path d="M435 222L525 275" stroke="#eee" stroke-width="4"/>
                        <path d="M345 365L540 280Q560 380 640 415L560 510z" fill="url(#reflector)"/>
                        <path d="M350 310L455 250 470 262 370 325z" fill="#77736e" stroke="#d9d4ce" stroke-width="6"/>
                        <path d="M185 240L205 230 215 240V290L185 265z" fill="#77736e"/>
                        <path d="M150 258L200 230 210 240 185 258 255 300 310 290 370 325 525 275 550 290 370 355 310 350z" fill="#e0dbd5"/>
                        <path d="M700 395L735 418Q720 480 640 500L605 470z" fill="#6c6864"/>
                        <path d="M545 480L590 462 600 430 680 372 712 385 612 465 680 500 665 540 720 580 640 560z" fill="#e0dbd5"/>
                        <path d="M665 495L760 440 780 465 765 490 680 540z" fill="url(#tube)"/>
                        <path d="M700 560L770 530 850 580 780 625z" fill="#ff0"/>
                        <path d="M735 590L780 560V615L760 620z" fill="#6c6864"/>
                        <path d="M52 240L155 190 160 252 780 640 945 548C950 700 890 830 770 822 700 855 650 905 570 905 490 905 400 850 300 750 140 590 60 420 52 240z" fill="#060606"/>
                        <path d="M135 275L160 270 720 610 700 620C705 720 640 820 560 822 440 820 330 740 250 620 180 510 140 390 135 275z" fill="#3a3b3b"/>
                        <path d="M155 282L720 605 695 620C695 710 640 795 560 812 450 795 350 730 275 620 205 510 165 410 155 282z" fill="#656767"/>
                        <g fill="none" stroke="#7b7d7d" stroke-width="6" opacity=".7"><path d="M165 300Q190 500 310 650T560 790"/><path d="M235 350Q290 540 420 620T640 640"/><path d="M310 390Q370 530 480 570T580 540" opacity=".5"/></g>
                        <path d="M150 300Q180 500 290 650T530 822" fill="none" stroke="#2b2c2c" stroke-width="6"/>
                        <path d="M55 240L150 190 240 138 250 145 90 228 120 262 150 255 740 590 785 622 930 543 945 550 770 650 715 615 130 275z" fill="#b9b9b6"/>
                        <path d="M150 262L730 592 722 606 140 272z" fill="#e2e0dc"/>
                        <path d="M180 270L220 290 218 300 182 280zM255 315L320 350 318 358zM575 505L635 530 630 538zM670 545L710 572 700 575z" fill="#444"/>
                        <path d="M250 138L158 192" stroke="#ff3" stroke-width="8"/>
                        <g stroke="#d8d8d4" stroke-width="4"><path d="M850 605L935 558M850 620L935 573M850 635L932 588M850 650L930 603M848 665L928 618M847 680L926 633M846 694L923 648M844 707L920 662M841 720L916 676M838 732L911 690M833 744L905 703M827 755L898 716M819 766L888 729M810 777L876 742M799 788L862 755M787 800L845 770M773 815L825 786"/></g>
                    </g>
                    <!-- triad -->
                    <path d="M377 734l-14-7" stroke="#8c1616" stroke-width="4"/><path d="M355 722l11 1-5 8z" fill="#8c1616"/>
                    <path d="M377 734V720" stroke="#1b6d1b" stroke-width="4"/><path d="M377 710l5 11h-10z" fill="#1b6d1b"/>
                    <path d="M377 735l13-7" stroke="#16168c" stroke-width="4"/><path d="M400 722l-11 1 5 8z" fill="#16168c"/>
                    <g class="axis"><text x="350" y="724" fill="#d33">X</text><text x="373" y="710" fill="#2a8a2a">Y</text><text x="396" y="724" fill="#22a">Z</text></g>
                </svg>
                <div class="view-toolbar">
                    <button aria-label="Zoom to fit"><svg><use href="#zoomfit"/></svg></button>
                    <button aria-label="Zoom to area"><svg><use href="#zoomarea"/></svg></button>
                    <button aria-label="Previous view"><svg><use href="#prevview"/></svg></button>
                    <button class="on" aria-label="Section view"><svg><use href="#section"/></svg></button>
                    <button aria-label="Annotation views"><svg viewBox="0 0 20 20"><use href="#viewann"/><text class="serif light" x="15" y="19" font-size="12" fill="#3b8fb5">A</text></svg></button>
                    <button class="drop" aria-label="View orientation"><svg><use href="#orient"/></svg><span class="caret"></span></button>
                    <button class="drop" aria-label="Display style"><svg><use href="#dispcube"/></svg><span class="caret"></span></button>
                    <button class="drop eye" aria-label="Hide/show items"><svg><use href="#eye"/></svg><span class="caret"></span></button>
                    <button aria-label="Edit appearance"><svg><use href="#scene"/></svg></button>
                    <button class="drop" aria-label="Apply scene"><svg><use href="#appear"/></svg><span class="caret"></span></button>
                    <button class="drop" aria-label="View settings"><svg><use href="#monitor"/></svg><span class="caret"></span></button>
                </div>
                <div class="splitter"><span class="dot"></span></div>
                <div class="taskpane">
                    <button aria-label="Resources"><svg><use href="#home"/></svg></button>
                    <button aria-label="Design library"><svg><use href="#library"/></svg></button>
                    <button aria-label="File explorer"><svg><use href="#open"/></svg></button>
                    <button aria-label="View palette"><svg><use href="#palette"/></svg></button>
                    <button class="active" aria-label="Appearances"><svg><use href="#ball"/></svg></button>
                    <button aria-label="Custom properties"><svg><use href="#props"/></svg></button>
                    <button aria-label="Forum"><svg><use href="#forum"/></svg></button>
                </div>
            </section>
        </main>

        <div class="sheet-tabs">
            <div class="sheet-nav">
                <button aria-label="First"><svg viewBox="0 0 12 12"><path d="M9 2v8L4 6zM2 2h1v8H2z" fill="#777"/></svg></button>
                <button aria-label="Previous"><svg viewBox="0 0 12 12"><path d="M8 2v8L3 6z" fill="#777"/></svg></button>
                <button aria-label="Next"><svg viewBox="0 0 12 12"><path d="M4 2v8l5-4z" fill="#777"/></svg></button>
                <button aria-label="Last"><svg viewBox="0 0 12 12"><path d="M3 2v8l5-4zM9 2h1v8H9z" fill="#777"/></svg></button>
            </div>
            <button class="active">Model</button>
            <button>3D Views</button>
            <button>Motion Study 1</button>
        </div>

        <div class="filterbar">
            <span class="dots"></span>
            <button aria-label="Toggle filter"><svg><use href="#f-off"/></svg></button>
            <button aria-label="Clear filters"><svg><use href="#f-offs"/></svg></button>
            <button aria-label="All filters"><svg><use href="#f-all"/></svg></button>
            <button class="select" aria-label="Select"><svg><use href="#arrow"/></svg><span class="caret"></span></button>
            <button aria-label="Select over"><svg><use href="#arrowoff"/></svg></button>
            <span class="sep"></span>
            <button aria-label="Vertices"><svg><use href="#f-pt"/></svg></button>
            <button aria-label="Edges"><svg><use href="#f-edge"/></svg></button>
            <button aria-label="Faces"><svg><use href="#f-face"/></svg></button>
            <button aria-label="Surface bodies"><svg><use href="#f-surf"/></svg></button>
            <button aria-label="Solid bodies"><svg><use href="#f-solid"/></svg></button>
            <button aria-label="Axes"><svg><use href="#f-axis"/></svg></button>
            <button aria-label="Planes"><svg><use href="#f-plane"/></svg></button>
            <button aria-label="Sketch points"><svg><use href="#f-skpt"/></svg></button>
            <button aria-label="Sketches"><svg><use href="#f-sk"/></svg></button>
            <button aria-label="Sketch segments"><svg><use href="#f-skseg"/></svg></button>
            <button aria-label="Midpoints"><svg><use href="#f-mid"/></svg></button>
            <button aria-label="Center marks"><svg><use href="#f-center"/></svg></button>
            <button aria-label="Centerlines"><svg><use href="#f-cline"/></svg></button>
            <button aria-label="Dimensions"><svg><use href="#f-dim"/></svg></button>
            <button aria-label="Surface finish"><svg><use href="#f-surffin"/></svg></button>
            <button aria-label="Geometric tolerances"><svg viewBox="0 0 24 24"><use href="#f-gtol"/><text class="mark" x="16" y="11" font-size="7">.03</text></svg></button>
            <button aria-label="Notes"><svg viewBox="0 0 24 24"><use href="#f-note"/><text class="mark" x="12" y="14" font-size="10">N</text></svg></button>
            <button aria-label="Datum features"><svg viewBox="0 0 24 24"><use href="#f-datum"/><text class="mark" x="10" y="14" font-size="12">A</text></svg></button>
            <button aria-label="Weld symbols"><svg><use href="#f-weld"/></svg></button>
            <button aria-label="Weld beads"><svg><use href="#f-weldb"/></svg></button>
            <button aria-label="Datum targets"><svg viewBox="0 0 24 24"><use href="#f-datumt"/><text class="mark" x="12" y="16" font-size="7">A</text></svg></button>
            <button aria-label="Cosmetic threads"><svg><use href="#f-cosm"/></svg></button>
            <button aria-label="Blocks"><svg viewBox="0 0 24 24"><use href="#f-block"/><text class="serif" x="9" y="15" font-size="13">A</text></svg></button>
            <button aria-label="Dowel pins"><svg><use href="#f-dowel"/></svg></button>
            <button aria-label="Connection points"><svg><use href="#f-conn"/></svg></button>
            <button aria-label="Routing points"><svg><use href="#f-route"/></svg></button>
            <span class="sep end"></span>
        </div>

        <footer class="statusbar">
            <span>SOLIDWORKS Premium 2017 x64 Edition</span>
            <div class="status-right">
                <span class="cells"><i></i><i></i><i></i><i></i></span>
                <button class="units">IPS<span class="caret up"></span></button>
                <button class="tag" aria-label="Tags"><svg viewBox="0 0 16 14"><path d="M1 5l6-4 8 6-1 4-4 2-9-6z" fill="#ccc" stroke="#333"/><circle cx="6" cy="5" r="2" fill="#fff" stroke="#333"/><path d="M1 5l9 6 5-4" fill="none" stroke="#333"/></svg></button>
            </div>
        </footer>
    </div>
</body>
</html>
```
FILE: styles.css
```
* {
    box-sizing: border-box;
}
body {
    margin: 0;
    font-family: "Open Sans", "Noto Sans", sans-serif;
    font-size: 11px;
    color: #1a1a1a;
    background-color: #f6f6f6;
}
button, input {
    font: inherit;
    color: inherit;
    border: none;
    background: none;
    padding: 0;
    margin: 0;
}
svg {
    display: block;
    flex: none;
}
.sprite {
    position: absolute;
    width: 0;
    height: 0;
}
.app {
    height: 100vh;
    display: flex;
    flex-direction: column;
    overflow: hidden;
}
.caret {
    display: block;
    flex: none;
    width: 0;
    height: 0;
    border: 3px solid transparent;
    border-top-color: #333;
    border-bottom: none;
}
.caret.up {
    border-top: none;
    border-bottom: 3px solid #333;
}
.dot {
    width: 6px;
    height: 6px;
    border: 1px solid #888;
    border-radius: 50%;
    background-color: #ccc;
}
.serif {
    font-family: "Liberation Serif", serif;
    font-weight: bold;
    text-anchor: middle;
}
.serif.light {
    font-weight: normal;
}
.mark {
    font-weight: bold;
    text-anchor: middle;
}

/* title bar */
.titlebar {
    height: 31px;
    flex: none;
    display: flex;
    border-bottom: 1px solid #808080;
}
.menubar {
    width: 608px;
    flex: none;
    display: flex;
    align-items: center;
    padding-left: 10px;
    border-right: 2px solid #999;
}
.logo {
    position: relative;
    z-index: 1;
    align-self: flex-start;
    flex: none;
    width: 145px;
    height: 35px;
    display: flex;
    align-items: center;
    gap: 4px;
    padding-left: 4px;
    border: 2px solid #999;
    border-top: none;
    background: linear-gradient(160deg, #fff 40%, #d4d4d4);
}
.logo-mark {
    width: 28px;
    height: 30px;
}
.logo-text {
    padding-top: 5px;
    font-size: 16px;
    font-style: italic;
    color: #c43a2c;
}
.menu-toggle {
    margin: 0 14px 0 6px;
    border: 7px solid transparent;
    border-right-color: #444;
    border-left: none;
}
.menu {
    display: flex;
    gap: 17px;
}
.pin {
    margin-left: 24px;
}
.pin svg {
    width: 14px;
    height: 10px;
}
.doc-title {
    flex: 1;
    align-self: center;
    text-align: center;
}
.title-tools {
    width: 400px;
    display: flex;
    align-items: center;
    justify-content: flex-end;
    padding-right: 6px;
}
.search {
    width: 202px;
    height: 24px;
    display: flex;
    align-items: center;
    gap: 4px;
    padding: 0 4px;
    border: 1px solid #bbb;
}
.prompt {
    width: 15px;
    height: 15px;
}
.search input {
    flex: 1;
    min-width: 0;
    height: 20px;
    padding-left: 3px;
    background-color: #ebebef;
}
.search input::placeholder {
    color: #555;
    opacity: 1;
}
.go {
    display: flex;
    align-items: center;
    gap: 5px;
    margin-left: 2px;
}
.go svg {
    width: 18px;
    height: 18px;
}
.help {
    margin-left: 12px;
    font-size: 17px;
    font-weight: bold;
    color: #333;
}
.help-more {
    margin: 0 12px;
}
.window-buttons {
    display: flex;
    gap: 12px;
    color: #444;
}
.window-buttons svg, .doc-buttons svg {
    width: 14px;
    height: 14px;
}

/* ribbon */
.ribbon {
    height: 86px;
    flex: none;
    display: flex;
    padding: 3px 0 2px 6px;
    margin-right: 1px;
    border-right: 1px solid #808080;
}
.ribbon-group {
    display: flex;
    border-right: 1px solid #c4c4c4;
}
.ribbon-group.last {
    border-right: none;
}
.big {
    width: 60px;
    display: flex;
    flex-direction: column;
    align-items: center;
    line-height: 13px;
    padding-top: 8px;
    position: relative;
}
.big.mid {
    padding-top: 15px;
}
.big svg {
    width: 20px;
    height: 20px;
}
.big .caret {
    position: absolute;
    top: 68px;
}
.big.roomy {
    width: 64px;
}
.big.slim {
    width: 42px;
}
.stack {
    display: flex;
    flex-direction: column;
    padding-top: 2px;
}
.stack button {
    height: 26px;
    display: flex;
    align-items: center;
    gap: 7px;
    white-space: nowrap;
}
.stack svg {
    width: 18px;
    height: 18px;
}
.stack.wide {
    width: 140px;
    padding-left: 3px;
}
.stack.cuts {
    width: 106px;
}
.stack.small {
    width: 64px;
    padding-left: 4px;
}
.stack.wraps {
    width: 82px;
    padding-left: 4px;
}

/* command tabs */
.tabrow {
    height: 22px;
    flex: none;
    display: flex;
    justify-content: space-between;
    background-color: #fff;
    border-top: 1px solid #808080;
}
.tabs {
    display: flex;
}
.tabs button {
    padding: 0 8px 0 9px;
    white-space: nowrap;
    background-color: #d2d2d2;
    border-right: 1px solid #808080;
    border-bottom: 1px solid #808080;
}
.tabs .active {
    padding: 0 7px 0 8px;
    background-color: #f6f6f6;
    font-weight: bold;
    color: #333;
    border-bottom-color: #bbb;
}
.doc-buttons {
    display: flex;
    align-items: flex-end;
    gap: 12px;
    padding-right: 12px;
    color: #999;
}

/* left toolbars */
.main {
    flex: 1;
    min-height: 0;
    display: flex;
    align-items: flex-start;
}
.sidebar {
    display: flex;
    flex-direction: column;
    align-items: center;
    padding: 14px 0 7px;
    border-right: 1px solid #808080;
    border-bottom: 1px solid #808080;
    background: radial-gradient(circle, #999 1px, transparent 1px) 2px 3px / 3px 4px repeat-x;
}
.sidebar button {
    height: 26px;
    display: flex;
    align-items: center;
}
.sidebar svg {
    width: 18px;
    height: 18px;
}
.sidebar hr {
    width: 25px;
    margin: 2px 0 5px;
    border: none;
    border-top: 1px solid #808080;
}
.views {
    width: 34px;
}
.sketches {
    width: 30px;
    border-right: none;
}

/* feature manager */
.panel {
    align-self: stretch;
    width: 272px;
    padding-left: 2px;
    display: flex;
    flex-direction: column;
    border-right: 1px solid #808080;
}
.grip {
    height: 17px;
    flex: none;
    margin: 2px 1px 4px 0;
    display: flex;
    align-items: center;
    justify-content: center;
    border-top: 1px solid #bbb;
    border-bottom: 1px solid #bbb;
}
.panel-tabs {
    display: flex;
    height: 26px;
    flex: none;
}
.panel-tabs button {
    width: 40px;
    display: flex;
    align-items: center;
    justify-content: center;
    background-color: #d2d2d2;
    border: 1px solid #808080;
    border-left: none;
}
.panel-tabs button svg {
    width: 18px;
    height: 18px;
}
.panel-tabs .active {
    background-color: #fcfcfc;
    border-bottom: none;
}
.panel-tabs .more {
    width: 18px;
    margin-left: auto;
    background: none;
    border: none;
}
.panel-tabs .more svg {
    width: 8px;
    height: 12px;
}
.filter {
    height: 25px;
    flex: none;
    display: flex;
    align-items: center;
    gap: 6px;
    margin: 0 3px 1px 3px;
    padding-left: 2px;
    border: 1px solid #bbb;
}
.filter svg {
    width: 18px;
    height: 18px;
}
.filter input {
    flex: 1;
    min-width: 0;
}
.tree-wrap {
    flex: 1;
    min-height: 0;
    display: flex;
}
.tree {
    flex: 1;
    min-width: 0;
    margin: 0;
    padding: 0;
    list-style: none;
    overflow: hidden;
}
.tree li {
    position: relative;
    height: 22px;
    display: flex;
    align-items: center;
    gap: 5px;
    padding-left: 25px;
    white-space: nowrap;
}
.tree .root {
    padding-left: 3px;
}
.tree .sub {
    padding-left: 48px;
}
.tree svg {
    width: 18px;
    height: 18px;
}
.tree .closed::before, .tree .opened::before {
    content: "";
    position: absolute;
    left: 8px;
    top: 6px;
    border: 4px solid transparent;
    border-left: 5px solid #555;
    border-right: none;
}
.tree .opened::before {
    left: 6px;
    top: 8px;
    border: 4px solid transparent;
    border-top: 5px solid #555;
    border-bottom: none;
}
.vscroll {
    width: 15px;
    display: flex;
    flex-direction: column;
    align-items: center;
    padding: 6px 0;
    background-color: #f0f0f0;
}
.vscroll svg {
    width: 10px;
    height: 6px;
}
.vscroll .thumb {
    width: 13px;
    height: 102px;
    margin: 4px 0 auto;
    background-color: #cdcdcd;
}
.hscroll {
    height: 15px;
    flex: none;
    display: flex;
    align-items: center;
    margin: 0 15px 2px 0;
    padding: 0 5px;
    background-color: #f0f0f0;
}
.hscroll svg {
    width: 6px;
    height: 10px;
}
.hscroll .thumb {
    width: 190px;
    height: 15px;
    margin: 0 auto 0 5px;
    background-color: #cdcdcd;
}

/* graphics area */
.viewport {
    position: relative;
    align-self: stretch;
    flex: 1;
    background-color: #fff;
}
.model {
    position: absolute;
    width: 100%;
    height: 100%;
}
.axis {
    font-family: "Liberation Sans", sans-serif;
    font-size: 11px;
}
.view-toolbar {
    position: relative;
    display: flex;
    justify-content: center;
    padding: 3px 4px 0 0;
}
.view-toolbar button {
    width: 26px;
    height: 26px;
    display: flex;
    align-items: center;
    justify-content: center;
}
.view-toolbar svg {
    width: 20px;
    height: 20px;
}
.view-toolbar .on {
    background-color: #9d9da1;
    border: 1px solid #555;
}
.view-toolbar .drop {
    width: 40px;
    justify-content: flex-start;
    gap: 6px;
    padding-left: 3px;
}
.view-toolbar .drop .caret {
    border-top-color: #888;
}
.view-toolbar .eye {
    border: 1px solid #999;
    background: linear-gradient(90deg, #bdbdbf 26px, #f6f6f6 26px);
}
.splitter {
    position: absolute;
    left: -1px;
    top: 297px;
    width: 9px;
    height: 39px;
    display: flex;
    align-items: center;
    justify-content: center;
    border: 1px solid #808080;
    border-left: none;
    background-color: #f6f6f6;
}
.taskpane {
    position: absolute;
    right: 0;
    top: 29px;
    width: 26px;
    border: 1px solid #808080;
    border-bottom: none;
    border-right: none;
}
.taskpane button {
    width: 25px;
    height: 24px;
    display: flex;
    align-items: center;
    justify-content: center;
    background-color: #d2d2d2;
    border-bottom: 1px solid #808080;
}
.taskpane .active {
    background-color: #fff;
}
.taskpane svg {
    width: 18px;
    height: 18px;
}

/* model tabs */
.sheet-tabs {
    height: 16px;
    flex: none;
    display: flex;
    padding-left: 93px;
    border-top: 1px solid #808080;
}
.sheet-tabs > button {
    height: 15px;
    line-height: 12px;
    padding: 0 14px 2px 11px;
    background-color: #d2d2d2;
    border-right: 1px solid #808080;
    border-bottom: 1px solid #808080;
}
.sheet-tabs > .active {
    padding: 0 9px 2px 14px;
    background: none;
    font-weight: bold;
    border-bottom-color: transparent;
}
.sheet-nav {
    display: flex;
    border-top: 1px solid #222;
}
.sheet-nav button {
    width: 16px;
    height: 14px;
    display: flex;
    align-items: center;
    justify-content: center;
    background-color: #b4b4b4;
    border: 1px solid #8c8c8c;
}
.sheet-nav svg {
    width: 12px;
    height: 12px;
}

/* selection filter toolbar */
.filterbar {
    height: 32px;
    flex: none;
    display: flex;
    align-items: center;
    padding: 1px 0 0 4px;
}
.filterbar button {
    width: 27px;
    display: flex;
    justify-content: center;
}
.filterbar svg {
    width: 24px;
    height: 24px;
}
.filterbar .dots {
    width: 4px;
    height: 26px;
    margin-right: 5px;
    background: radial-gradient(circle, #999 1px, transparent 1px) 0 0 / 4px 3px repeat-y;
}
.filterbar .select {
    width: 42px;
    height: 26px;
    align-items: center;
    justify-content: flex-start;
    gap: 7px;
    padding-left: 1px;
    border: 1px solid #777;
    background: linear-gradient(90deg, #b4b4b4 28px, #fafafa 28px);
}
.filterbar .sep {
    width: 1px;
    height: 22px;
    margin: 0 6px 0 3px;
    background-color: #808080;
}
.filterbar .end {
    height: 30px;
    margin: 0 0 0 6px;
}

/* status bar */
.statusbar {
    height: 20px;
    flex: none;
    display: flex;
    align-items: center;
    justify-content: space-between;
    padding: 0 3px 0 1px;
    border-top: 1px solid #808080;
    border-bottom: 1px solid #26313c;
}
.status-right {
    display: flex;
    align-items: center;
}
.cells {
    display: flex;
    gap: 7px;
    margin-right: 41px;
}
.cells i {
    width: 1px;
    height: 17px;
    background-color: #ccc;
}
.cells i:last-child {
    margin-left: 8px;
}
.units {
    display: flex;
    align-items: center;
    gap: 29px;
    margin-right: 67px;
}
.tag svg {
    width: 16px;
    height: 14px;
}
```
